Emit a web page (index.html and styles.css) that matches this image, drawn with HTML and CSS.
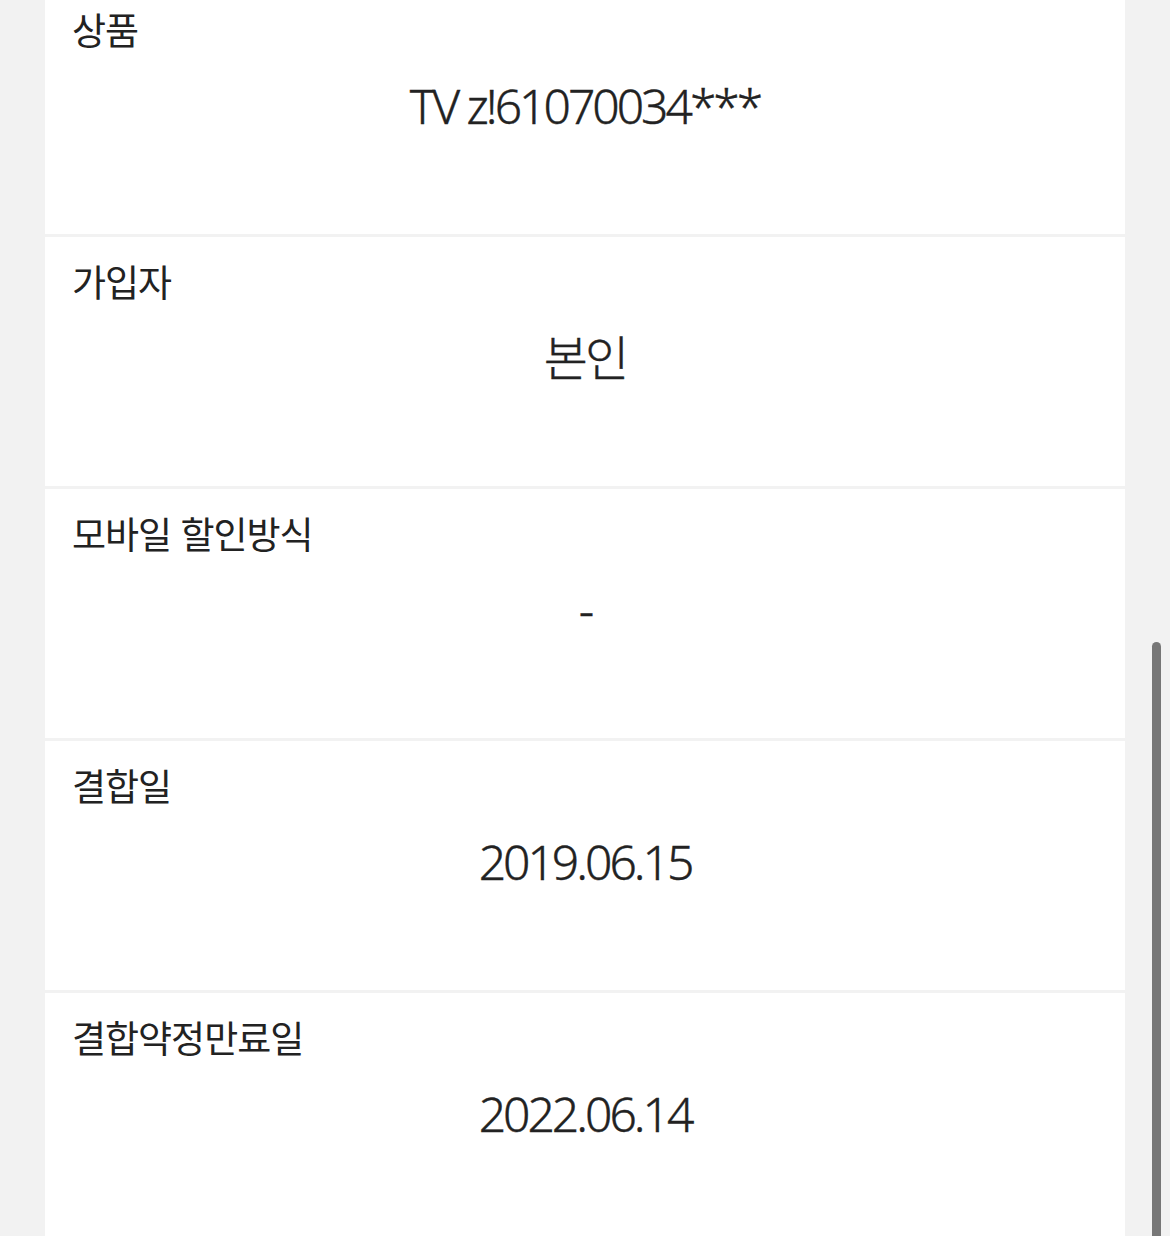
FILE: index.html
```html
<!DOCTYPE html>
<html lang="ko">
<head>
    <meta charset="UTF-8">
    <meta name="viewport" content="width=device-width, initial-scale=1.0">
    <title>결합 상세</title>
    <link rel="stylesheet" href="styles.css">
</head>
<body>

<div class="container">
    <div class="info-row">
        <div class="info-label">상품</div>
        <div class="info-value">TV z!61070034***</div>
    </div>
    <div class="info-row">
        <div class="info-label">가입자</div>
        <div class="info-value">본인</div>
    </div>
    <div class="info-row">
        <div class="info-label">모바일 할인방식</div>
        <div class="info-value">-</div>
    </div>
    <div class="info-row">
        <div class="info-label">결합일</div>
        <div class="info-value">2019.06.15</div>
    </div>
    <div class="info-row">
        <div class="info-label">결합약정만료일</div>
        <div class="info-value">2022.06.14</div>
    </div>
</div>

<div class="scroll-thumb"></div>

</body>
</html>
```

FILE: styles.css
```css
html, body {
    height: 100%;
    overflow: hidden;
}
body {
    font-family: "Noto Sans", "Noto Sans CJK KR", sans-serif;
    background-color: #f2f2f2;
    color: #222;
    margin: 0;
}
.container {
    width: 1080px;
    margin: -15px 0 0 45px;
    display: flex;
    flex-direction: column;
    gap: 3px;
}
.info-row {
    background: #fff;
    height: 249px;
    padding: 0 27px;
    box-sizing: border-box;
}
.info-label {
    font-family: "Noto Sans CJK KR", sans-serif;
    font-size: 37px;
    line-height: 44px;
    padding-top: 22px;
    letter-spacing: -1px;
}
.info-value {
    text-align: center;
    font-size: 48px;
    font-weight: 300;
    line-height: 56px;
    margin-top: 27px;
    letter-spacing: -3px;
    -webkit-text-stroke: 0.4px #222;
}
.scroll-thumb {
    position: absolute;
    left: 1152px;
    top: 642px;
    width: 9px;
    height: 620px;
    border-radius: 5px;
    background: #777;
}
```
